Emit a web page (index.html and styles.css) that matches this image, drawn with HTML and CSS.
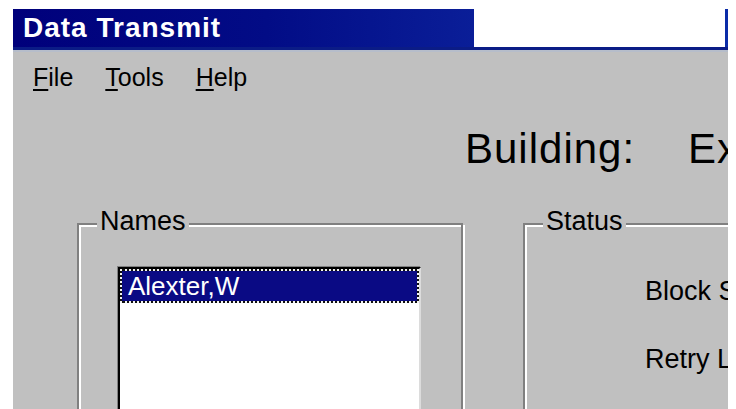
FILE: index.html
```html
<!DOCTYPE html>
<html lang="en">
<head>
<meta charset="utf-8">
<title>Data Transmit</title>
<link rel="stylesheet" href="styles.css">
</head>
<body>
<div class="screen">
  <div class="window">
    <div class="titlebar">
      <div class="caption">Data Transmit</div>
      <div class="caption-blank"></div>
    </div>
    <div class="menubar">
      <span class="menu-item"><u>F</u>ile</span>
      <span class="menu-item"><u>T</u>ools</span>
      <span class="menu-item"><u>H</u>elp</span>
    </div>
    <div class="building">
      <span class="building-label">Building:</span>
      <span class="building-value">Ex</span>
    </div>
    <div class="groups">
      <div class="group group-names">
        <span class="legend">Names</span>
        <div class="listbox">
          <div class="list-item selected">Alexter,W</div>
        </div>
      </div>
      <div class="group group-status">
        <span class="legend">Status</span>
        <div class="status-row">Block Size:</div>
        <div class="status-row">Retry Limit:</div>
      </div>
    </div>
  </div>
</div>
</body>
</html>
```
FILE: styles.css
```css
html, body {
  margin: 0;
  padding: 0;
  background: #fff;
}

body {
  width: 736px;
  height: 409px;
  overflow: hidden;
  font-family: "Liberation Sans", Arial, sans-serif;
}

.screen {
  box-sizing: border-box;
  height: 409px;
  padding: 9px 8px 0 13px;
}

.window {
  width: 715px;
  height: 400px;
  background: #c0c0c0;
  overflow: hidden;
  color: #000;
  white-space: nowrap;
}

/* caption bar */
.titlebar {
  display: flex;
  height: 38px;
  border-bottom: 3px solid #0b1c86;
}

.caption {
  width: 461px;
  box-sizing: border-box;
  padding-left: 10px;
  background: linear-gradient(90deg, #00007b 0%, #020c86 55%, #0a1e98 100%);
  color: #fff;
  font-weight: bold;
  font-size: 28px;
  line-height: 38px;
  letter-spacing: 1px;
}

.caption-blank {
  flex: 1;
  background: #fff;
  border-right: 3px solid #0b2ca8;
}

/* menu bar */
.menubar {
  display: flex;
  gap: 32px;
  border-top: 2px solid #b6bdca;
  padding: 10px 0 0 20px;
  font-size: 25px;
  line-height: 30px;
}

.menu-item u {
  text-decoration-thickness: 2px;
  text-underline-offset: 3px;
}

/* building heading */
.building {
  display: flex;
  gap: 53px;
  margin-top: 33px;
  padding-left: 452px;
  font-size: 42px;
  line-height: 47px;
  letter-spacing: 1px;
}

/* group boxes */
.groups {
  display: flex;
  gap: 60px;
  margin-top: 51px;
  padding-left: 64px;
}

.group {
  position: relative;
  flex-shrink: 0;
  box-sizing: border-box;
  height: 300px;
  border: 2px solid #808080;
  box-shadow: inset 2px 2px 0 #fff, 2px 2px 0 #fff;
}

.group-names {
  width: 386px;
}

.group-status {
  width: 320px;
  padding: 51px 0 0 120px;
}

.legend {
  position: absolute;
  top: -19px;
  left: 18px;
  padding: 0 3px;
  background: #c0c0c0;
  font-size: 27px;
  line-height: 30px;
}

/* list box */
.listbox {
  box-sizing: border-box;
  width: 303px;
  height: 220px;
  margin: 42px 0 0 39px;
  background: #fff;
  border-top: 2px solid #000;
  border-left: 2px solid #000;
  border-right: 2px solid #dcdcdc;
  box-shadow: -1px -1px 0 #808080;
}

.list-item {
  box-sizing: border-box;
  height: 34px;
  padding-left: 6px;
  font-size: 26px;
  line-height: 30px;
}

.list-item.selected {
  color: #fff;
  border: 2px dotted #f4f4f4;
  background: linear-gradient(#0a0a84, #0a0a84) padding-box,
              linear-gradient(#111, #111) border-box;
}

/* status labels */
.status-row {
  font-size: 27px;
  line-height: 30px;
}

.status-row + .status-row {
  margin-top: 38px;
}
```
